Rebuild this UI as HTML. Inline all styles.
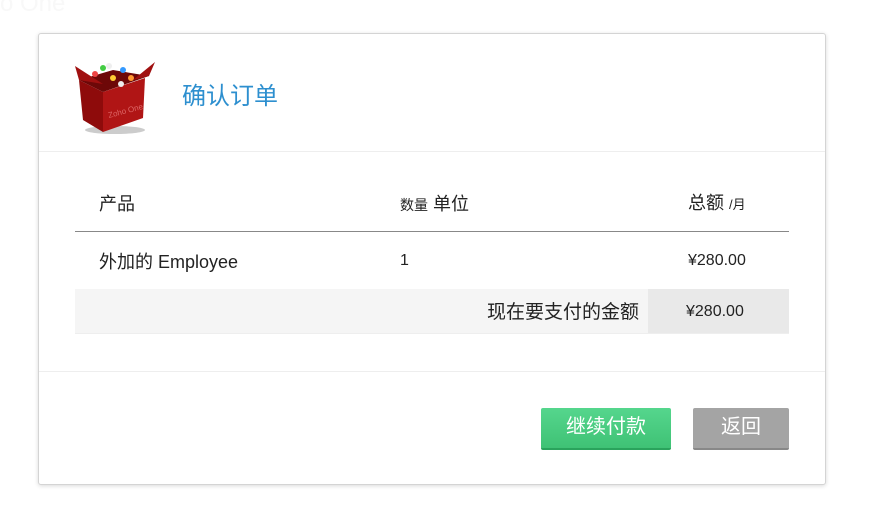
<!DOCTYPE html>
<html><head><meta charset="utf-8"><style>
body{margin:0;width:892px;height:522px;background:#fff;font-family:"Liberation Sans","Noto Sans CJK SC",sans-serif;position:relative;overflow:hidden;color:#222}
.bg{position:absolute;left:0;top:-10px;font-size:24px;color:#f8f8f8}
.dlg{position:absolute;left:38px;top:33px;width:786px;height:450px;border:1px solid #d4d4d4;border-radius:3px;background:#fff;box-shadow:0 1px 4px rgba(0,0,0,.15)}
.hdr{position:absolute;left:0;top:0;width:100%;height:117px;border-bottom:1px solid #eee}
.title{position:absolute;left:143px;top:42px;font-size:24px;color:#2d8fcf}
.t{position:absolute;font-size:18px;white-space:nowrap}
.line{position:absolute;left:36px;width:714px;height:1px;background:#888;top:197px}
.tot{position:absolute;left:36px;top:255px;width:714px;height:44px;background:#f5f5f5;border-bottom:1px solid #eee}
.tot .g{position:absolute;right:0;top:0;width:141px;height:44px;background:#e9e9e9}
.ftr{position:absolute;left:0;top:337px;width:100%;height:1px;background:#eee}
.btn{position:absolute;top:374px;height:40px;color:#fff;font-size:20px;text-align:center;line-height:39px;border-radius:2px}
</style></head><body>
<div class="bg">o One</div>
<div class="dlg">
<div class="hdr">
<svg style="position:absolute;left:34px;top:22px" width="84" height="80" viewBox="0 0 84 80">
<ellipse cx="42" cy="74" rx="30" ry="4" fill="#ccc"/>
<polygon points="6,24 30,36 30,76 10,64" fill="#8e0b0b"/>
<polygon points="30,36 72,22 70,62 30,76" fill="#b01515"/>
<polygon points="6,24 40,14 76,20 30,36" fill="#6d0808"/>
<polygon points="6,24 2,10 30,28" fill="#a01010"/>
<polygon points="76,20 82,6 60,24" fill="#a01010"/>
<circle cx="22" cy="18" r="3" fill="#e44"/><circle cx="30" cy="12" r="3" fill="#4c4"/><circle cx="40" cy="22" r="3" fill="#fc3"/><circle cx="50" cy="14" r="3" fill="#39f"/><circle cx="58" cy="22" r="3" fill="#f93"/><circle cx="48" cy="28" r="3" fill="#eee"/><circle cx="36" cy="10" r="3" fill="#eee"/>
<text x="36" y="62" font-size="8" fill="#d66" transform="rotate(-15 36 62)">Zoho One</text>
</svg>
<div class="title">确认订单</div>
</div>
<div class="t" style="left:60px;top:156px">产品</div>
<div class="t" style="left:361px;top:156px"><span style="font-size:14px">数量</span> 单位</div>
<div class="t" style="left:649px;top:155px">总额 <span style="font-size:13px">/月</span></div>
<div class="line"></div>
<div class="t" style="left:60px;top:214px">外加的 Employee</div>
<div class="t" style="left:361px;top:218px;font-size:16px">1</div>
<div class="t" style="left:649px;top:218px;font-size:16px">¥280.00</div>
<div class="tot"><div class="t" style="right:150px;top:8px;font-size:19px">现在要支付的金额</div><div class="g"><div class="t" style="left:38px;top:14px;font-size:16px">¥280.00</div></div></div>
<div class="ftr"></div>
<div class="btn" style="left:502px;width:130px;background:linear-gradient(#55d68d,#3fc275);border-bottom:2px solid #2aa35c">继续付款</div>
<div class="btn" style="left:654px;width:96px;background:#a4a4a4;border-bottom:2px solid #888">返回</div>
</div>
</body></html>
